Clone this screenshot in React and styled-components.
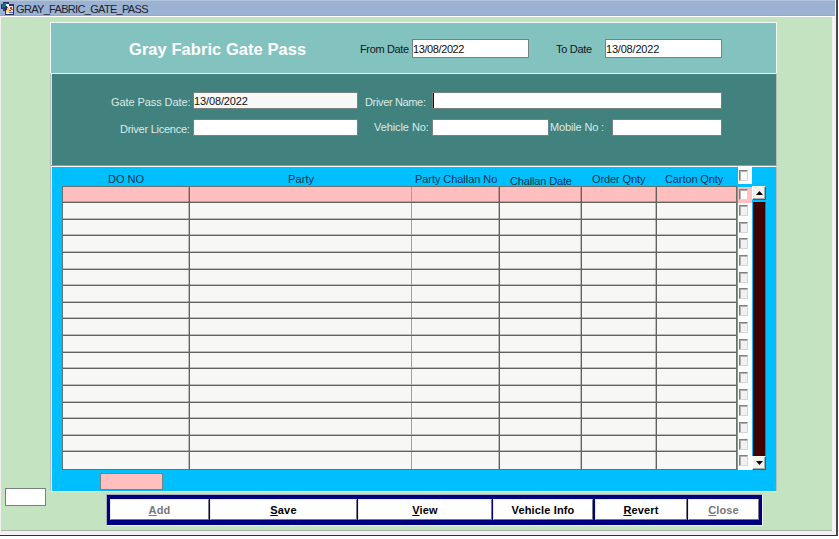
import React from "react";
import styled, { createGlobalStyle } from "styled-components";

const Global = createGlobalStyle`
  * { box-sizing: border-box; }
  body { margin: 0; background: #fff; overflow: hidden; }
  input, button { font: inherit; margin: 0; border-radius: 0; }
`;

const Window = styled.div`
  width: 838px;
  height: 536px;
  background: #f2f2f0;
  border-right: 2px solid #484848;
  border-bottom: 1px solid #303030;
  font: 11px/14px "Liberation Sans", Arial, sans-serif;
  color: #101820;
`;

const TitleBar = styled.header`
  height: 17px;
  width: 835px;
  padding-left: 1px;
  display: flex;
  background: #9bb2d3;
  border-top: 1px solid #b4c6dc;
  border-bottom: 1px solid #fff;
  box-shadow: inset 0 -1px #a5a5ab;
  color: #1c2230;
  svg { flex: none; width: 14px; height: 14px; }
`;

const Label = styled.span`
  flex: none;
  width: ${(p) => (p.$w ? `${p.$w}px` : "auto")};
  white-space: pre;
  line-height: 14px;
  letter-spacing: ${(p) => p.$ls || 0}px;
  margin: ${(p) => p.$top || 0}px 0 0 ${(p) => p.$left || 0}px;
  color: ${(p) => p.$color || "inherit"};
`;

const Canvas = styled.main`
  width: 831px;
  height: 514px;
  margin-left: 1px;
  background: #c4e3c1;
  border-bottom: 1px solid #a9b3a7;
  display: grid;
  grid-template-columns: 49px 727px;
  grid-template-rows: 475px 38px;
`;

const Side = styled.aside`
  grid-row: 1 / 3;
  padding: 471px 0 0 4px;
`;

const Panels = styled.div`
  padding-top: 5px;
`;

const HeadPanel = styled.section`
  height: 51px;
  background: #82c3c0;
  border: 1px solid #eefaf8;
  border-bottom-width: 0;
  display: flex;
`;

const Title = styled.h1`
  flex: none;
  margin: 16px 0 0 78px;
  width: 231px;
  font: bold 16.5px/20px "Liberation Sans", Arial, sans-serif;
  letter-spacing: 0.05px;
  color: #fff;
  white-space: nowrap;
`;

const FormPanel = styled.section`
  height: 93px;
  padding-top: 18px;
  background: #41827f;
  border: 1px solid #b3bdbb;
  border-top: 1px solid #eefaf8;
  border-bottom: 1px solid #909c99;
  box-shadow: inset 1px 0 #d8e6e4;
`;

const FormRow = styled.div`
  display: flex;
  height: 27px;
`;

const Field = styled.input`
  display: block;
  flex: none;
  width: ${(p) => p.$w}px;
  height: ${(p) => p.$h || 17}px;
  margin: ${(p) => p.$top || 0}px 0 0 ${(p) => p.$left || 0}px;
  padding: 0;
  border: 1px solid #758380;
  background: ${(p) => p.$bg || "#fff"};
  color: #101010;
  letter-spacing: ${(p) => p.$ls ?? -0.12}px;
  outline: none;
`;

const CaretField = styled(Field)`
  box-shadow: inset 1px 0 #101010;
`;

const DataPanel = styled.section`
  height: 326px;
  background: #00bfff;
  border: 1px solid #b3bdbb;
  border-top-color: #fff;
  border-bottom-color: #eaf6f8;
  box-shadow: inset 1px 0 #d8eef6;
`;

const HeadRow = styled.div`
  height: 19px;
  padding-left: 11px;
  display: grid;
  grid-template-columns: 127px 222px 89px 82px 75px 81px 14px;
  color: #073450;
`;

const GridBody = styled.div`
  display: flex;
  height: 284px;
  padding-left: 11px;
`;

const Table = styled.div`
  width: 675px;
  height: 284px;
  border: 1px solid #687371;
  display: grid;
  grid-template-rows: 16px repeat(16, 1fr);
`;

const Row = styled.div`
  display: grid;
  grid-template-columns: 127px 222px 88px 82px 75px 1fr;
  background: ${(p) => (p.$active ? "#ffbfbf" : "#f7f7f5")};
  border-bottom: 1px solid #62625f;
  box-shadow: inset 0 -1px rgba(80, 80, 80, 0.35);
  &:last-child { border-bottom: 0; box-shadow: none; }
`;

const Cell = styled.div`
  border-right: ${(p) => (p.$last ? 0 : 1)}px solid ${(p) => (p.$soft ? "#a0a09c" : "#62625f")};
  box-shadow: ${(p) => (p.$last || p.$soft ? "none" : "inset -1px 0 rgba(80, 80, 80, 0.35)")};
`;

const CheckColumn = styled.div`
  width: 14px;
  height: 283px;
  margin: 1px 0 0 1px;
  background: #fff;
  display: grid;
  grid-template-rows: 16px repeat(16, 1fr);
`;

const CheckCell = styled.div`
  padding: ${(p) => (p.$head ? 3 : 2)}px 0 0 1px;
  height: ${(p) => (p.$head ? "17px" : "auto")};
  background: ${(p) => (p.$active ? "#ffbfbf" : "#fff")};
`;

const Check = styled.input.attrs({ type: "checkbox" })`
  appearance: none;
  display: block;
  width: 9px;
  height: 11px;
  margin: 0;
  border: 1px solid #d6d6d4;
  border-top-color: #808080;
  border-left-color: #808080;
  box-shadow: inset 1px 1px #b0b0ae;
  background: ${(p) => (p.$white ? "#fff" : "#f1f1ef")};
`;

const ScrollBar = styled.div`
  width: 14px;
  display: grid;
  grid-template-rows: 14px 1fr 14px;
`;

const ScrollButton = styled.button`
  display: grid;
  place-items: center;
  padding: 0;
  background: #f1f1ef;
  border: 1px solid #fff;
  border-right-color: #555;
  border-bottom-color: #555;
  box-shadow: inset -1px -1px #aaa;
`;

const Track = styled.div`
  margin: 1px 0 0 1px;
  background: #400000;
  border-top: 1px solid #a08a8a;
  border-right: 1px solid #706060;
`;

const Footer = styled.footer`
  padding: 2px 0 0 56px;
`;

const ButtonBar = styled.nav`
  width: 657px;
  height: 32px;
  padding: 4px 4px 5px 2px;
  background: #00007f;
  border: 1px solid #a9abc0;
  border-right-color: #eef5ee;
  border-bottom-color: #eef5ee;
  display: grid;
  grid-template-columns: 99px 147px 134px 100px 93px 71px;
  column-gap: 1px;
  padding-left: 3px;
  > :nth-child(5) { margin-left: 1px; }
`;

const BarButton = styled.button`
  padding: 1px 0 0;
  border: 1px solid #e9e9ee;
  border-right-color: #777788;
  border-bottom-color: #777788;
  background: #fff;
  color: ${(p) => (p.disabled ? "#777" : "#000")};
  font-weight: bold;
  letter-spacing: 0.15px;
  u { text-underline-offset: 1px; }
`;

const AppIcon = () => (
  <svg viewBox="0 0 14 14" shapeRendering="crispEdges">
    <path d="M0 3h2V1h6v2h5v11H4v-4H2V8H0z" fill="#2a3060" />
    <path d="M1 3h2V2h3v3H4v2H1z" fill="#14757c" />
    <path d="M2 6h2v3H2z" fill="#2038c8" />
    <path d="M5 3h3v2H5z" fill="#f2f4ee" />
    <path d="M6 5h6v8H5v-3h1z" fill="#eee2e4" />
    <path d="M5 9h1V7h2v2h1v2H5z" fill="#f0dc50" />
    <path d="M9 6h2v2H9zM6 6h1v1H6zM8 9h2v1H8z" fill="#d83444" />
    <path d="M10 8h2v1h-2zM8 11h4v1H8z" fill="#5262b8" />
  </svg>
);

const Arrow = ({ down }) => (
  <svg width="7" height="4" viewBox="0 0 7 4">
    <path d={down ? "M0 0h7L3.5 4z" : "M0 4h7L3.5 0z"} fill="#000" />
  </svg>
);

const headings = [
  ["DO NO", 46, 5, 0],
  ["Party", 99, 5, 0.1],
  ["Party Challan No", 4, 5, -0.06],
  ["Challan Date", 10, 7, -0.15],
  ["Order Qnty", 10, 5, -0.1],
  ["Carton Qnty", 8, 5, -0.1],
];
const rows = Array.from({ length: 17 }, (_, i) => i);
const pale = "#d9ebe8";

export default function App() {
  return (
    <>
      <Global />
      <Window>
        <TitleBar>
          <AppIcon />
          <Label $ls={-0.68} $left={1} $top={1}>GRAY_FABRIC_GATE_PASS</Label>
        </TitleBar>
        <Canvas>
          <Side>
            <Field $w={41} $h={18} aria-label="Record" />
          </Side>
          <Panels>
            <HeadPanel>
              <Title>Gray Fabric Gate Pass</Title>
              <Label $top={19} $w={52} $ls={-0.35}>From Date</Label>
              <Field $w={117} $h={19} $top={16} $ls={-0.4} defaultValue="13/08/2022" />
              <Label $top={19} $left={27} $w={49} $ls={-0.3}>To Date</Label>
              <Field $w={117} $h={19} $top={16} $ls={-0.2} defaultValue="13/08/2022" />
            </HeadPanel>
            <FormPanel>
              <FormRow>
                <Label $color={pale} $left={60} $w={82} $top={3} $ls={-0.08}>Gate Pass Date:</Label>
                <Field $w={165} $bg="#f7f7f5" defaultValue="13/08/2022" />
                <Label $color={pale} $left={7} $w={67} $top={3} $ls={-0.35}>Driver Name:</Label>
                <CaretField $w={290} />
              </FormRow>
              <FormRow>
                <Label $color={pale} $left={69} $w={73} $top={3} $ls={-0.25}>Driver Licence:</Label>
                <Field $w={165} />
                <Label $color={pale} $left={16} $w={58} $top={1} $ls={-0.08}>Vehicle No:</Label>
                <Field $w={117} />
                <Label $color={pale} $left={1} $w={62} $top={1} $ls={-0.15}>Mobile No :</Label>
                <Field $w={110} />
              </FormRow>
            </FormPanel>
            <DataPanel>
              <HeadRow>
                {headings.map(([text, left, top, ls]) => (
                  <Label key={text} $left={left} $top={top} $ls={ls}>{text}</Label>
                ))}
                <CheckCell $head><Check $white /></CheckCell>
              </HeadRow>
              <GridBody>
                <Table>
                  {rows.map((i) => (
                    <Row key={i} $active={i === 0}>
                      <Cell /><Cell $soft /><Cell /><Cell /><Cell /><Cell $last />
                    </Row>
                  ))}
                </Table>
                <CheckColumn>
                  {rows.map((i) => (
                    <CheckCell key={i} $active={i === 0}><Check $white={i === 0} /></CheckCell>
                  ))}
                </CheckColumn>
                <ScrollBar>
                  <ScrollButton><Arrow /></ScrollButton>
                  <Track />
                  <ScrollButton><Arrow down /></ScrollButton>
                </ScrollBar>
              </GridBody>
              <Field $w={63} $h={17} $left={49} $top={3} $bg="#ffbfbf" aria-label="Total" />
            </DataPanel>
          </Panels>
          <Footer>
            <ButtonBar>
              <BarButton disabled><u>A</u>dd</BarButton>
              <BarButton><u>S</u>ave</BarButton>
              <BarButton><u>V</u>iew</BarButton>
              <BarButton>Vehicle Info</BarButton>
              <BarButton><u>R</u>evert</BarButton>
              <BarButton disabled><u>C</u>lose</BarButton>
            </ButtonBar>
          </Footer>
        </Canvas>
      </Window>
    </>
  );
}
